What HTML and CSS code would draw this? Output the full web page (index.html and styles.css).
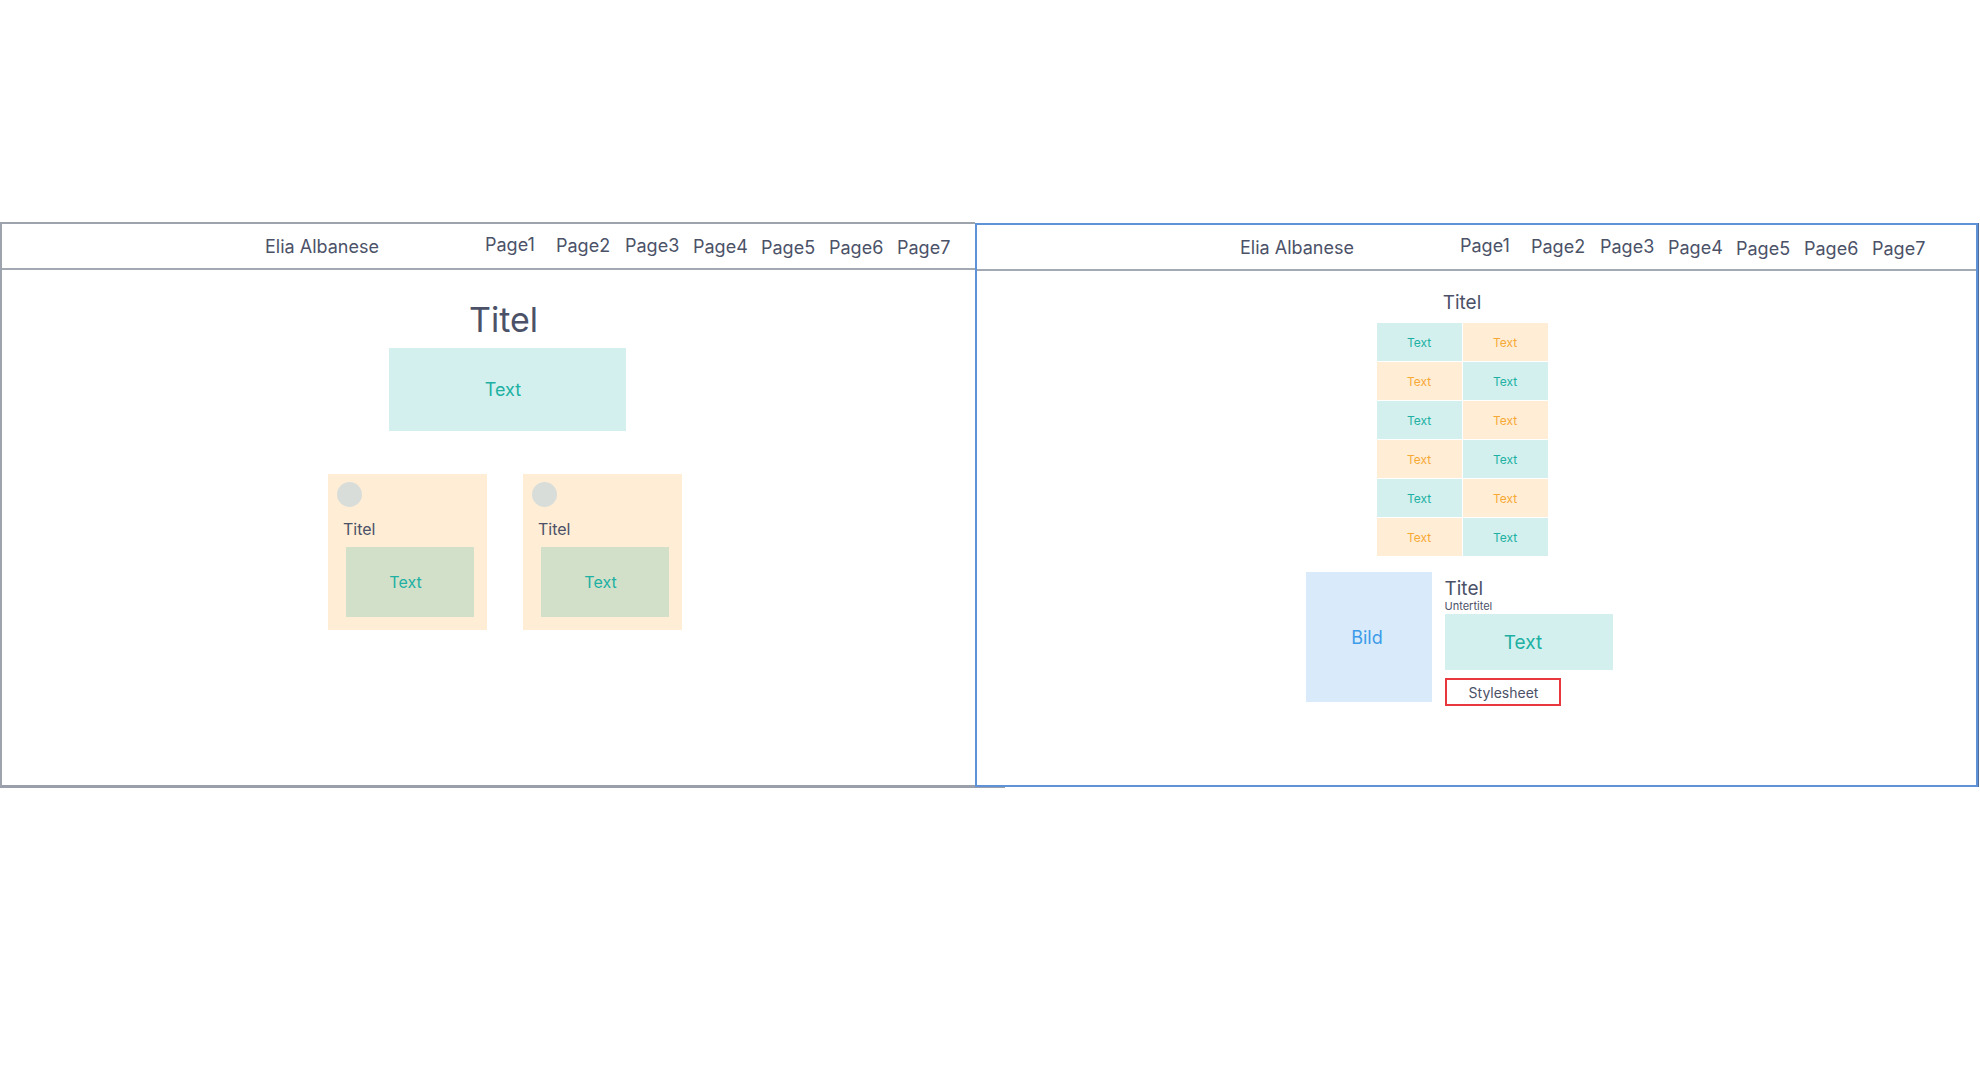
FILE: index.html
```html
<!DOCTYPE html>
<html lang="de">
<head>
<meta charset="utf-8">
<title>Elia Albanese – Wireframes</title>
<link rel="stylesheet" href="styles.css">
</head>
<body>
<div class="stage">
  <section class="frame frame-a">
    <header class="bar">
      <span class="brand">Elia Albanese</span>
      <nav class="pages">
        <span class="page">Page1</span>
        <span class="page">Page2</span>
        <span class="page">Page3</span>
        <span class="page">Page4</span>
        <span class="page">Page5</span>
        <span class="page">Page6</span>
        <span class="page">Page7</span>
      </nav>
    </header>
    <main class="canvas-a">
      <h1 class="big-title">Titel</h1>
      <div class="hero">Text</div>
      <div class="cards">
        <div class="card">
          <div class="avatar"></div>
          <div class="card-title">Titel</div>
          <div class="card-body">Text</div>
        </div>
        <div class="card">
          <div class="avatar"></div>
          <div class="card-title">Titel</div>
          <div class="card-body">Text</div>
        </div>
      </div>
    </main>
  </section>

  <section class="frame frame-b">
    <header class="bar">
      <span class="brand">Elia Albanese</span>
      <nav class="pages">
        <span class="page">Page1</span>
        <span class="page">Page2</span>
        <span class="page">Page3</span>
        <span class="page">Page4</span>
        <span class="page">Page5</span>
        <span class="page">Page6</span>
        <span class="page">Page7</span>
      </nav>
    </header>
    <main class="canvas-b">
      <h2 class="mid-title">Titel</h2>
      <div class="grid">
        <div class="cell teal">Text</div>
        <div class="cell peach">Text</div>
        <div class="cell peach">Text</div>
        <div class="cell teal">Text</div>
        <div class="cell teal">Text</div>
        <div class="cell peach">Text</div>
        <div class="cell peach">Text</div>
        <div class="cell teal">Text</div>
        <div class="cell teal">Text</div>
        <div class="cell peach">Text</div>
        <div class="cell peach">Text</div>
        <div class="cell teal">Text</div>
      </div>
      <div class="media">
        <div class="bild">Bild</div>
        <div class="media-body">
          <div class="m-title">Titel</div>
          <div class="m-sub">Untertitel</div>
          <div class="m-text">Text</div>
          <button class="style-btn" type="button">Stylesheet</button>
        </div>
      </div>
    </main>
  </section>
</div>
</body>
</html>
```

FILE: styles.css
```css
* { box-sizing: border-box; }

html, body {
  margin: 0;
  padding: 0;
  background: #ffffff;
  font-family: Inter, "Noto Sans", "Liberation Sans", sans-serif;
  color: #4b5268;
}

.stage {
  display: grid;
  grid-template-columns: 975px 30px 973px;
  padding-top: 222px;
}

.frame {
  grid-row: 1;
  background: #ffffff;
  display: flex;
  flex-direction: column;
}

.frame-a {
  grid-column: 1 / 3;
  height: 566px;
  border-top: 2px solid #9ea4ae;
  border-left: 2px solid #9ea4ae;
  border-bottom: 3px solid #9aa0ab;
  box-shadow: 0 2px 0 #e2e6ea;
}

.frame-b {
  grid-column: 2 / 4;
  height: 564px;
  margin-top: 1px;
  border: 2px solid #6092d8;
  box-shadow: 1px 0 0 #4f6f9e, 0 -2px 0 #ffffff;
  z-index: 1;
}

.bar {
  height: 46px;
  flex: none;
  border-bottom: 2px solid #a3a9b3;
  display: flex;
  align-items: center;
  padding-left: 263px;
  font-size: 18px;
  color: #4b5268;
}

.brand {
  width: 220px;
  flex: none;
}

.pages {
  display: flex;
}

.page {
  width: 68px;
  flex: none;
}

.page:first-child { width: 71px; }
.page:nth-child(2) { width: 69px; }

.page:nth-child(2),
.page:nth-child(3) { padding-top: 1px; }
.page:nth-child(4) { padding-top: 2px; }
.page:nth-child(5),
.page:nth-child(6),
.page:nth-child(7) { padding-top: 3px; }

/* ---------- frame A ---------- */
.canvas-a {
  display: flex;
  flex-direction: column;
  align-items: center;
  padding-top: 29px;
}

.big-title {
  margin: 0;
  font-size: 34px;
  line-height: 41px;
  font-weight: 400;
  color: #4b5268;
}

.hero {
  margin: 8px 0 0 8px;
  width: 237px;
  height: 83px;
  padding-right: 9px;
  background: #d3f0ee;
  color: #20b0a3;
  font-size: 18px;
  display: flex;
  align-items: center;
  justify-content: center;
}

.cards {
  margin: 43px 0 0 3px;
  display: flex;
  gap: 36px;
}

.card {
  width: 159px;
  height: 156px;
  background: #ffedd5;
  padding: 8px 0 0 9px;
  display: flex;
  flex-direction: column;
  align-items: flex-start;
}

.avatar {
  width: 25px;
  height: 25px;
  border-radius: 50%;
  background: #d8ddda;
}

.card-title {
  margin: 12px 0 0 6px;
  font-size: 16px;
  line-height: 20px;
}

.card-body {
  margin: 8px 0 0 9px;
  width: 128px;
  height: 70px;
  padding-right: 9px;
  background: #d3e0c9;
  color: #20b0a3;
  font-size: 16px;
  display: flex;
  align-items: center;
  justify-content: center;
}

/* ---------- frame B ---------- */
.canvas-b {
  display: flex;
  flex-direction: column;
  align-items: center;
  padding-top: 20px;
  padding-right: 29px;
}

.mid-title {
  margin: 0;
  font-size: 19px;
  line-height: 23px;
  font-weight: 400;
  color: #4b5268;
}

.grid {
  margin-top: 9px;
  display: grid;
  grid-template-columns: 85px 85px;
  grid-auto-rows: 38px;
  gap: 1px;
}

.cell {
  display: flex;
  align-items: center;
  justify-content: center;
  font-size: 12px;
}

.cell.teal { background: #d3f0ee; color: #20b0a3; }
.cell.peach { background: #ffedd5; color: #f7a936; }

.media {
  margin: 16px 6px 0 0;
  display: flex;
  align-items: flex-start;
  gap: 13px;
}

.bild {
  width: 126px;
  height: 130px;
  padding-right: 3px;
  background: #d9ebfa;
  color: #3d9be9;
  font-size: 18px;
  display: flex;
  align-items: center;
  justify-content: center;
}

.media-body {
  width: 168px;
  display: flex;
  flex-direction: column;
  align-items: flex-start;
  padding-top: 6px;
}

.m-title {
  font-size: 19px;
  line-height: 22px;
}

.m-sub {
  margin-top: 0;
  font-size: 11px;
  line-height: 12px;
}

.m-text {
  margin-top: 2px;
  width: 168px;
  height: 56px;
  padding-right: 11px;
  background: #d3f0ee;
  color: #20b0a3;
  font-size: 19px;
  display: flex;
  align-items: center;
  justify-content: center;
}

.style-btn {
  margin-top: 8px;
  width: 116px;
  height: 28px;
  border: 2px solid #e8383d;
  background: #ffffff;
  color: #4b5268;
  font-family: Inter, "Noto Sans", "Liberation Sans", sans-serif;
  font-size: 14px;
  padding: 0 0 0 2px;
}
```
